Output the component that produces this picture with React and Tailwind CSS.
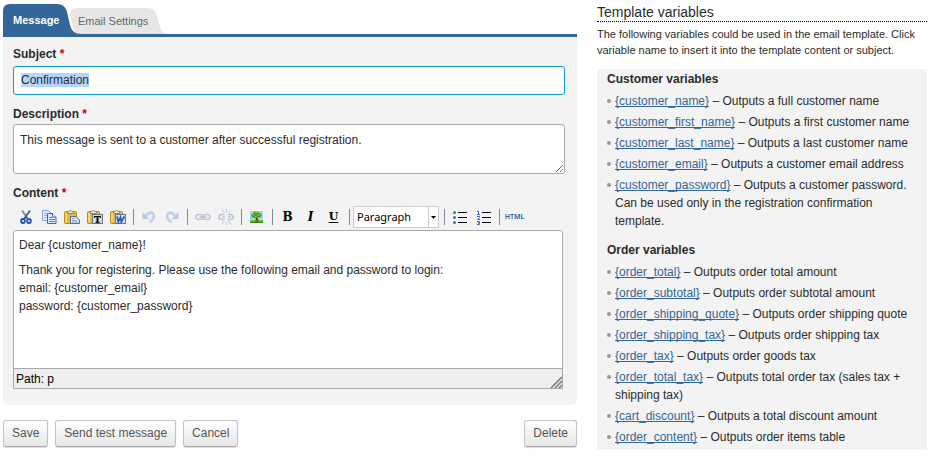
import { useEffect, useRef } from "react";

const customerVariables = [
  ["{customer_name}", "Outputs a full customer name"],
  ["{customer_first_name}", "Outputs a first customer name"],
  ["{customer_last_name}", "Outputs a last customer name"],
  ["{customer_email}", "Outputs a customer email address"],
  [
    "{customer_password}",
    "Outputs a customer password. Can be used only in the registration confirmation template.",
  ],
];

const orderVariables = [
  ["{order_total}", "Outputs order total amount"],
  ["{order_subtotal}", "Outputs order subtotal amount"],
  ["{order_shipping_quote}", "Outputs order shipping quote"],
  ["{order_shipping_tax}", "Outputs order shipping tax"],
  ["{order_tax}", "Outputs order goods tax"],
  ["{order_total_tax}", "Outputs total order tax (sales tax + shipping tax)"],
  ["{cart_discount}", "Outputs a total discount amount"],
  ["{order_content}", "Outputs order items table"],
];

function Icon({ children }) {
  return (
    <svg width="20" height="20" viewBox="0 0 20 20" fill="none" aria-hidden="true">
      {children}
    </svg>
  );
}

function CutIcon() {
  return (
    <Icon>
      <path d="M6 3.500l6 8.500" stroke="#7d8ca8" strokeWidth="1.800" />
      <path d="M14 3.500l-6 8.500" stroke="#4d5c78" strokeWidth="1.800" />
      <path d="M10 9.500v2" stroke="#2b4f8e" strokeWidth="2" />
      <ellipse cx="7" cy="14" rx="1.900" ry="2" stroke="#1f54b4" strokeWidth="1.800" />
      <ellipse cx="13" cy="14" rx="1.900" ry="2" stroke="#1f54b4" strokeWidth="1.800" />
    </Icon>
  );
}

function CopyIcon() {
  return (
    <Icon>
      <path d="M3.500 3.500h6l3 3v7h-9z" fill="#e4edfb" stroke="#7fa2da" />
      <path d="M5 6.500h4M5 8.500h4M5 10.500h3" stroke="#8fb0e2" />
      <path d="M8.500 6.500h5l3.500 3.500v6.500h-8.500z" fill="#dfe9fa" stroke="#3f69b0" />
      <path d="M13.500 6.500v3.500h3.500" fill="#fff" stroke="#3f69b0" />
      <path d="M10 10.500h3M10 12.500h6M10 14.500h6" stroke="#5b87cf" />
    </Icon>
  );
}

function Clipboard() {
  return (
    <>
      <rect x="2.500" y="4.500" width="12" height="12" rx="1" fill="#e9b93f" stroke="#b58a2c" />
      <path d="M4 6v9" stroke="#f8df8e" strokeWidth="1.500" />
      <path d="M5.500 6.500v-2h1.500q1.500-2.500 3 0h1.500v2z" fill="#f4f1cf" stroke="#8f8452" />
    </>
  );
}

function PasteIcon() {
  return (
    <Icon>
      <Clipboard />
      <path d="M8.500 9.500h5.500l3.500 3.500v3.500h-9z" fill="#dfe7f3" stroke="#566c90" />
      <path d="M10 11.500h3M10 13.500h5M10 15h6" stroke="#8ba3c8" />
    </Icon>
  );
}

function PasteTextIcon() {
  return (
    <Icon>
      <Clipboard />
      <rect x="7.500" y="7.500" width="10" height="9" fill="#d9dbe2" stroke="#6c7184" />
      <path d="M9 9h7v2h-.8l-.7-1h-1v4.800h1v1.200h-4v-1.200h1V10h-1l-.7 1H9z" fill="#111" />
    </Icon>
  );
}

function PasteWordIcon() {
  return (
    <Icon>
      <Clipboard />
      <rect x="7.500" y="7.500" width="10" height="9" fill="#cfdff7" stroke="#5878ad" />
      <path d="M9 9.500l1.300 5.500 2.200-5 .8 5 3-5.500" stroke="#2a55a5" strokeWidth="1.600" />
    </Icon>
  );
}

function UndoIcon() {
  return (
    <Icon>
      <path d="M3.500 5v7h7z" fill="#b9c9e9" />
      <path d="M6.500 9q4.500-5 7.500-2.500q3 4-3.500 9" stroke="#c1cfec" strokeWidth="2.500" />
    </Icon>
  );
}

function RedoIcon() {
  return (
    <Icon>
      <path d="M16.500 5v7h-7z" fill="#b9c9e9" />
      <path d="M13.500 9q-4.500-5-7.500-2.500q-3 4 3.500 9" stroke="#c1cfec" strokeWidth="2.500" />
    </Icon>
  );
}

function LinkIcon() {
  return (
    <Icon>
      <rect x="3" y="7.500" width="7" height="5" rx="2.500" stroke="#c3c9d8" strokeWidth="1.500" />
      <rect x="10" y="7.500" width="7" height="5" rx="2.500" stroke="#c3c9d8" strokeWidth="1.500" />
      <path d="M6.500 10h7" stroke="#b3bccf" strokeWidth="1.500" />
    </Icon>
  );
}

function UnlinkIcon() {
  return (
    <Icon>
      <path d="M8.500 7.500H6q-3 0-3 2.500t3 2.500h2.500M6 10h3" stroke="#bdc5d6" strokeWidth="1.600" />
      <path d="M12 7.500h2.500q2.500 0 2.500 2.500t-2.500 2.500H11.500M12 10h3" stroke="#bdc5d6" strokeWidth="1.600" />
      <path d="M10.500 2v3.500M6 2.500l2.500 3.500M15 2.500l-2.500 3.500M10.500 14.500v3.500M5.500 17.500l2.500-3.500M15 17.500l-2.500-3.500" stroke="#c3cad8" />
    </Icon>
  );
}

function ImageIcon() {
  return (
    <Icon>
      <rect x="2" y="3" width="15" height="14" fill="#fff" />
      <rect x="3" y="4" width="13" height="10" fill="#a3d2f8" />
      <path d="M3 13h13v3H3z" fill="#7ccb3c" />
      <path d="M3 14.500h13v1.500H3z" fill="#2c8a18" />
      <path d="M9 9h1.500l1 5.500h-3z" fill="#6b4a1d" />
      <path d="M4.500 9q-.5-2 1.500-2.500q.5-2.500 3-2q2.500-.5 3.500 1.500q2.500.5 2 3q-.5 2-3 1.500q-1.500 1-2.500 0q-1 1-2.500 0q-2 .3-2-1.500z" fill="#459d25" />
      <path d="M5.500 8h2M8 5.500h3M10.500 8h2.500M8 9.500h1.500" stroke="#98d53c" />
    </Icon>
  );
}

function BulletListIcon() {
  return (
    <Icon>
      <circle cx="3.500" cy="5.500" r="1.500" fill="#4068b8" />
      <circle cx="3.500" cy="10.500" r="1.500" fill="#4068b8" />
      <circle cx="3.500" cy="15.500" r="1.500" fill="#4068b8" />
      <path d="M7 5.500h9M7 10.500h9M7 15.500h9" stroke="#000" />
    </Icon>
  );
}

function NumberListIcon() {
  return (
    <Icon>
      <path d="M3 4.500h1.500v3M3 7.500h3M3 9.500h2.500v1L3.500 12.500H6M3 14.500h2.500v3H3M3.500 16h2" stroke="#3c68c0" />
      <path d="M8 5.500h9M8 10.500h9M8 15.500h9" stroke="#000" />
    </Icon>
  );
}

function Tool({ label, children }) {
  return (
    <button type="button" aria-label={label} className="flex h-5 w-[23px] shrink-0 items-center justify-center">
      {children}
    </button>
  );
}

function Divider() {
  return (
    <span className="flex w-2 shrink-0 justify-center">
      <span className="h-4 w-px bg-[#85889a]" />
    </span>
  );
}

function Toolbar() {
  return (
    <div role="toolbar" aria-label="Formatting" className="flex h-7 items-center pt-0.5 pl-px">
      <Tool label="Cut"><CutIcon /></Tool>
      <Tool label="Copy"><CopyIcon /></Tool>
      <Tool label="Paste"><PasteIcon /></Tool>
      <Tool label="Paste as text"><PasteTextIcon /></Tool>
      <Tool label="Paste from Word"><PasteWordIcon /></Tool>
      <Divider />
      <Tool label="Undo"><UndoIcon /></Tool>
      <Tool label="Redo"><RedoIcon /></Tool>
      <Divider />
      <Tool label="Link"><LinkIcon /></Tool>
      <Tool label="Unlink"><UnlinkIcon /></Tool>
      <Divider />
      <Tool label="Image"><ImageIcon /></Tool>
      <Divider />
      <Tool label="Bold">
        <span className="font-['DejaVu_Serif',serif] text-xs font-bold text-black">B</span>
      </Tool>
      <Tool label="Italic">
        <span className="font-['DejaVu_Serif',serif] text-xs font-bold italic text-black">I</span>
      </Tool>
      <Tool label="Underline">
        <span className="font-['DejaVu_Serif',serif] text-[11px] font-bold text-black underline underline-offset-2">U</span>
      </Tool>
      <Divider />
      <div className="relative shrink-0">
        <select
          aria-label="Block format"
          className="h-[22px] w-[86px] appearance-none border border-[#ccc] bg-white pl-[3px] font-['Noto_Sans',sans-serif] text-[11px] text-black"
        >
          <option>Paragraph</option>
        </select>
        <span className="pointer-events-none absolute inset-y-px right-px flex w-[10px] items-center justify-center border-l border-[#ccc]">
          <svg width="5" height="3" viewBox="0 0 5 3" aria-hidden="true">
            <path d="M0 0h5L2.500 3z" fill="#000" />
          </svg>
        </span>
      </div>
      <span className="flex w-[10px] shrink-0 justify-center">
        <span className="h-4 w-px bg-[#85889a]" />
      </span>
      <Tool label="Bulleted list"><BulletListIcon /></Tool>
      <Tool label="Numbered list"><NumberListIcon /></Tool>
      <Divider />
      <Tool label="HTML source">
        <span className="font-['Noto_Sans',sans-serif] text-[7px] font-semibold text-[#2b56a0]">HTML</span>
      </Tool>
    </div>
  );
}

function Required() {
  return <span className="text-[#c00]">*</span>;
}

function Tabs() {
  return (
    <div role="tablist" className="flex h-[33px] items-end border-b-[3px] border-[#336699] text-[11px]">
      <button role="tab" aria-selected="true" type="button" className="relative z-10 h-[30px] w-[67px] pt-0.5 pl-[10px] text-left font-bold text-white">
        <svg className="absolute left-0 top-0" width="78" height="30" viewBox="0 0 78 30" aria-hidden="true">
          <path d="M0 30V7Q0 0 7 0H54Q62 0 64 8L67 21Q69 30 78 30Z" fill="#336699" />
        </svg>
        <span className="relative">Message</span>
      </button>
      <button role="tab" aria-selected="false" type="button" className="relative h-[26px] w-[94px] pl-2 text-left text-[#666]">
        <svg className="absolute left-0 top-0" width="97" height="26" viewBox="0 0 97 26" aria-hidden="true">
          <path d="M0 7Q0 0 7 0H77Q85 0 87 8L90 19Q92 26 97 26H5Z" fill="#e6e6e6" />
        </svg>
        <span className="relative">Email Settings</span>
      </button>
    </div>
  );
}

function MessageForm() {
  const subject = useRef(null);
  useEffect(() => {
    subject.current.focus();
    subject.current.select();
  }, []);

  return (
    <div className="rounded-b-[5px] bg-[#f3f3f3] pt-2 pr-3 pb-4 pl-[10px]">
      <label htmlFor="subject" className="block font-bold leading-[18px]">
        Subject <Required />
      </label>
      <input
        id="subject"
        ref={subject}
        type="text"
        defaultValue="Confirmation"
        className="mt-[3px] mb-[10px] block h-[29px] w-full rounded-[3px] border border-[#999] bg-white px-[7px] pb-0.5 outline-none selection:bg-[#b4d5fe] selection:text-[#2b2b2b] focus:border-[#0d9ad2]"
      />
      <label htmlFor="description" className="block font-bold leading-[18px]">
        Description <Required />
      </label>
      <textarea
        id="description"
        defaultValue="This message is sent to a customer after successful registration."
        className="mt-px mb-[10px] block h-[50px] w-full resize-y rounded-[3px] border border-[#aaa] bg-white px-[6px] py-[6px] leading-[18px] outline-none"
      />
      <div id="content-label" className="font-bold leading-[18px]">
        Content <Required />
      </div>
      <Toolbar />
      <div className="mr-0.5 rounded-t-[3px] border border-[#aaa] bg-white">
        <div
          role="textbox"
          aria-multiline="true"
          aria-labelledby="content-label"
          contentEditable
          suppressContentEditableWarning
          className="min-h-[137px] px-[5px] pt-[5px] leading-[18px] outline-none"
        >
          <p className="mb-[7px]">Dear {"{customer_name}"}!</p>
          <p>
            Thank you for registering. Please use the following email and password to login:
            <br />
            email: {"{customer_email}"}
            <br />
            password: {"{customer_password}"}
          </p>
        </div>
        <div className="flex h-5 items-end justify-between border-t border-[#aaa] bg-[#eee] pl-0.5 text-black">
          <span className="self-center">Path: p</span>
          <svg width="12" height="12" viewBox="0 0 12 12" aria-hidden="true">
            <path d="M1 12L12 1M5 12L12 5M9 12L12 9" stroke="#777" strokeWidth="1.500" />
          </svg>
        </div>
      </div>
    </div>
  );
}

function Button({ children }) {
  return (
    <button
      type="button"
      className="h-[27px] rounded-[3px] border border-[#c4c4c4] border-b-[#aaa] bg-linear-to-b from-white to-[#e6e6e6] px-2 pb-0.5 text-[#555] shadow-[0_1px_1px_#ddd]"
    >
      {children}
    </button>
  );
}

function VariableGroup({ title, items }) {
  return (
    <section>
      <h3 className="leading-[18px] font-bold">{title}</h3>
      <ul className="mt-1 leading-[18px]">
        {items.map(([name, text]) => (
          <li key={name} className="mb-[3px] flex gap-1">
            <span className="mt-[7px] size-1 shrink-0 rounded-full bg-[#999]" />
            <span>
              <a href="#subject" className="text-[#336699] underline [text-decoration-skip-ink:none]">{name}</a> – {text}
            </span>
          </li>
        ))}
      </ul>
    </section>
  );
}

export default function App() {
  return (
    <div className="flex items-start gap-5 bg-white pr-2 pl-[3px] font-['Liberation_Sans',Arial,sans-serif] text-xs text-[#2b2b2b]">
      <main className="min-w-0 flex-1 pt-1">
        <Tabs />
        <MessageForm />
        <div className="mt-[15px] flex gap-[7px]">
          <Button>Save</Button>
          <Button>Send test message</Button>
          <Button>Cancel</Button>
          <div className="ml-auto">
            <Button>Delete</Button>
          </div>
        </div>
      </main>
      <aside className="w-[330px] shrink-0 pt-1">
        <h2 className="border-b border-dotted border-black text-sm leading-[17px]">Template variables</h2>
        <p className="mt-1 text-[11px] leading-4">
          The following variables could be used in the email template. Click variable name to insert it into the template
          content or subject.
        </p>
        <div className="mt-[11px] flex flex-col gap-2 bg-[#f3f3f3] px-[10px] py-px">
          <VariableGroup title="Customer variables" items={customerVariables} />
          <VariableGroup title="Order variables" items={orderVariables} />
        </div>
      </aside>
    </div>
  );
}
